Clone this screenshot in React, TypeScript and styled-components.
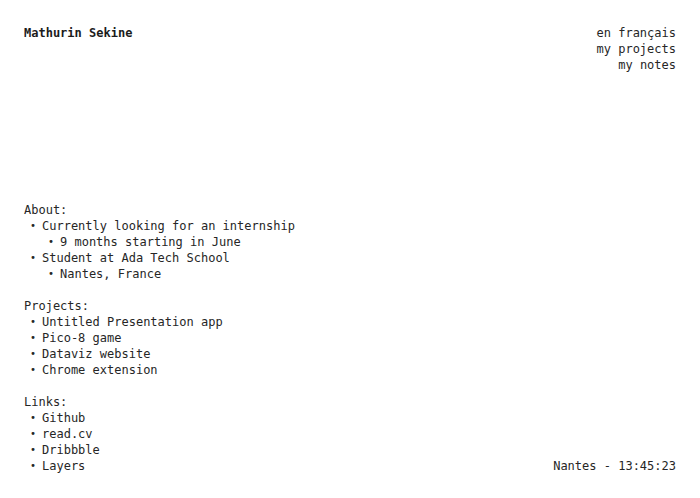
import React from "react";
import styled, { createGlobalStyle } from "styled-components";

const Global = createGlobalStyle`
  html, body { margin: 0; padding: 0; background: #ffffff; }
  body {
    font-family: "DejaVu Sans Mono", "Liberation Mono", monospace;
    font-size: 12px;
    line-height: 16px;
    color: #262626;
  }
`;

const Page = styled.div`
  box-sizing: border-box;
  height: 100vh;
  padding: 25px 24px 24px 24px;
  display: flex;
  flex-direction: column;
  justify-content: space-between;
`;

const Header = styled.header`
  display: flex;
  justify-content: space-between;
  align-items: flex-start;
`;

const Name = styled.div`
  font-weight: bold;
  color: #1c1c1c;
`;

const Nav = styled.nav`
  display: flex;
  flex-direction: column;
  align-items: flex-end;
`;

const NavLink = styled.a`
  color: inherit;
  text-decoration: none;
`;

const Bottom = styled.div`
  display: flex;
  justify-content: space-between;
  align-items: flex-end;
`;

const Content = styled.div`
  display: flex;
  flex-direction: column;
  gap: 16px;
`;

const Section = styled.section``;

const Title = styled.div``;

const List = styled.ul`
  margin: 0;
  padding: 0;
  list-style: none;
`;

const Item = styled.li<{ $depth?: number }>`
  display: flex;
  padding-left: ${(p) => 6 + (p.$depth ?? 0) * 18}px;
`;

const Bullet = styled.span`
  flex: 0 0 12px;
  font-size: 10px;
`;

const Clock = styled.div`
  white-space: nowrap;
`;

type Entry = { text: string; depth?: number };

const sections: { title: string; items: Entry[] }[] = [
  {
    title: "About:",
    items: [
      { text: "Currently looking for an internship" },
      { text: "9 months starting in June", depth: 1 },
      { text: "Student at Ada Tech School" },
      { text: "Nantes, France", depth: 1 },
    ],
  },
  {
    title: "Projects:",
    items: [
      { text: "Untitled Presentation app" },
      { text: "Pico-8 game" },
      { text: "Dataviz website" },
      { text: "Chrome extension" },
    ],
  },
  {
    title: "Links:",
    items: [
      { text: "Github" },
      { text: "read.cv" },
      { text: "Dribbble" },
      { text: "Layers" },
    ],
  },
];

export default function App() {
  return (
    <>
      <Global />
      <Page>
        <Header>
          <Name>Mathurin Sekine</Name>
          <Nav>
            <NavLink href="#">en français</NavLink>
            <NavLink href="#">my projects</NavLink>
            <NavLink href="#">my notes</NavLink>
          </Nav>
        </Header>
        <Bottom>
          <Content>
            {sections.map((s) => (
              <Section key={s.title}>
                <Title>{s.title}</Title>
                <List>
                  {s.items.map((it) => (
                    <Item key={it.text} $depth={it.depth}>
                      <Bullet>•</Bullet>
                      <span>{it.text}</span>
                    </Item>
                  ))}
                </List>
              </Section>
            ))}
          </Content>
          <Clock>Nantes - 13:45:23</Clock>
        </Bottom>
      </Page>
    </>
  );
}
